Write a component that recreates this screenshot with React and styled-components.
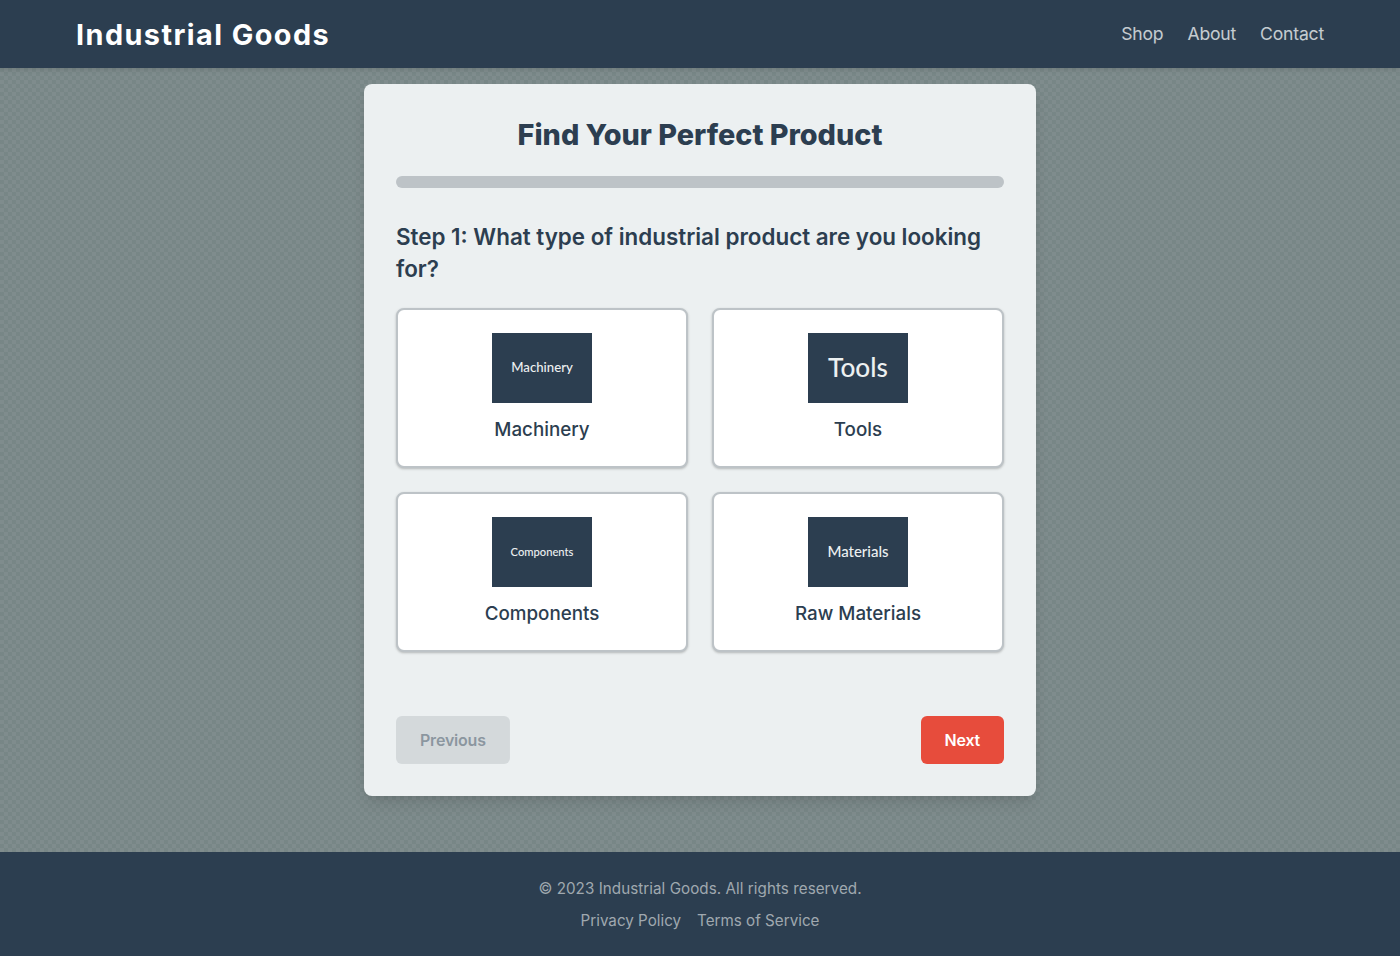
import React from "react";
import styled, { createGlobalStyle } from "styled-components";

const GlobalStyle = createGlobalStyle`
  * { box-sizing: border-box; }
  html, body { margin: 0; padding: 0; }
  body {
    font-family: Inter, "Liberation Sans", sans-serif;
    color: #2c3e50;
    background-color: #7f8c8d;
    background-image:
      linear-gradient(45deg, rgba(40, 80, 70, 0.09) 25%, transparent 25%, transparent 75%, rgba(40, 80, 70, 0.09) 75%),
      linear-gradient(45deg, rgba(40, 80, 70, 0.09) 25%, transparent 25%, transparent 75%, rgba(40, 80, 70, 0.09) 75%);
    background-size: 8px 8px;
    background-position: 0 0, 4px 4px;
  }
`;

const categories = [
  { id: "machinery", thumb: "Machinery", thumbSize: 13.2, label: "Machinery" },
  { id: "tools", thumb: "Tools", thumbSize: 26.2, label: "Tools" },
  { id: "components", thumb: "Components", thumbSize: 11.2, label: "Components" },
  { id: "materials", thumb: "Materials", thumbSize: 15, label: "Raw Materials" },
];

export default function App() {
  return (
    <Page>
      <GlobalStyle />
      <Header>
        <Logo>Industrial Goods</Logo>
        <Nav>
          <NavLink href="#">Shop</NavLink>
          <NavLink href="#">About</NavLink>
          <NavLink href="#">Contact</NavLink>
        </Nav>
      </Header>
      <Main>
        <Card>
          <Title>Find Your Perfect Product</Title>
          <ProgressTrack />
          <StepTitle>Step 1: What type of industrial product are you looking for?</StepTitle>
          <OptionGrid>
            {categories.map((item) => (
              <Option key={item.id}>
                <Thumb $size={item.thumbSize}>{item.thumb}</Thumb>
                <OptionLabel>{item.label}</OptionLabel>
              </Option>
            ))}
          </OptionGrid>
          <Actions>
            <PrevButton type="button" disabled>
              Previous
            </PrevButton>
            <NextButton type="button">Next</NextButton>
          </Actions>
        </Card>
      </Main>
      <Footer>
        <FooterText>© 2023 Industrial Goods. All rights reserved.</FooterText>
        <FooterLinks>
          <FooterLink href="#">Privacy Policy</FooterLink>
          <FooterLink href="#">Terms of Service</FooterLink>
        </FooterLinks>
      </Footer>
    </Page>
  );
}

const Page = styled.div`
  min-height: 956px;
  display: flex;
  flex-direction: column;
`;

const Header = styled.header`
  height: 68px;
  padding: 0 76px;
  display: flex;
  align-items: center;
  justify-content: space-between;
  background: #2c3e50;
  box-shadow: 0 2px 4px rgba(0, 0, 0, 0.1);
`;

const Logo = styled.div`
  font-size: 28.8px;
  font-weight: 700;
  letter-spacing: 1.44px;
  color: #fff;
`;

const Nav = styled.nav`
  display: flex;
  gap: 24px;
`;

const NavLink = styled.a`
  font-size: 17.6px;
  line-height: 28px;
  letter-spacing: -0.2px;
  color: #ecf0f1;
  opacity: 0.8;
  text-decoration: none;
`;

const Main = styled.main`
  flex: 1;
  padding: 16px 0 56px;
  display: flex;
  justify-content: center;
  align-items: flex-start;
`;

const Card = styled.section`
  width: 672px;
  padding: 33px 32px 32px;
  background: #ecf0f1;
  border-radius: 8px;
  box-shadow: 0 10px 15px -3px rgba(0, 0, 0, 0.1), 0 4px 6px -2px rgba(0, 0, 0, 0.05);
`;

const Title = styled.h1`
  margin: 0 0 23px;
  font-size: 28.8px;
  line-height: 36px;
  font-weight: 800;
  text-align: center;
  color: #2c3e50;
`;

const ProgressTrack = styled.div`
  height: 12px;
  margin-bottom: 33px;
  border-radius: 6px;
  background: #bdc3c7;
`;

const StepTitle = styled.h2`
  margin: 0 0 23px;
  font-size: 22.4px;
  line-height: 32px;
  font-weight: 600;
  color: #2c3e50;
`;

const OptionGrid = styled.div`
  display: grid;
  grid-template-columns: 1fr 1fr;
  gap: 24px;
`;

const Option = styled.div`
  height: 160px;
  padding-top: 23px;
  display: flex;
  flex-direction: column;
  align-items: center;
  background: #fff;
  border: 2px solid #bdc3c7;
  border-radius: 8px;
  box-shadow: 0 1px 3px rgba(0, 0, 0, 0.15), 0 1px 2px rgba(0, 0, 0, 0.1);
`;

const Thumb = styled.div`
  width: 100px;
  height: 70px;
  margin-bottom: 13px;
  padding-bottom: 2px;
  display: flex;
  align-items: center;
  justify-content: center;
  background: #2c3e50;
  color: #ecf0f1;
  font-family: Lato, "Liberation Sans", sans-serif;
  font-weight: 500;
  font-size: ${(p) => p.$size}px;
`;

const OptionLabel = styled.div`
  font-size: 18.8px;
  line-height: 28px;
  font-weight: 500;
  color: #2c3e50;
`;

const Actions = styled.div`
  margin-top: 64px;
  display: flex;
  justify-content: space-between;
`;

const PrevButton = styled.button`
  height: 48px;
  padding: 0 24px;
  border: 0;
  border-radius: 6px;
  background: #bdc3c7;
  color: #2c3e50;
  opacity: 0.5;
  font-family: inherit;
  font-size: 16px;
  font-weight: 600;
  letter-spacing: -0.2px;
`;

const NextButton = styled.button`
  height: 48px;
  padding: 0 24px;
  border: 0;
  border-radius: 6px;
  background: #e74c3c;
  color: #fff;
  font-family: inherit;
  font-size: 16px;
  font-weight: 600;
  letter-spacing: -0.2px;
`;

const Footer = styled.footer`
  height: 104px;
  padding-top: 25px;
  background: #2c3e50;
  color: #bdc3c7;
  text-align: center;
`;

const FooterText = styled.div`
  font-size: 15.2px;
  line-height: 24px;
  letter-spacing: 0.05px;
  margin-bottom: 8px;
  opacity: 0.8;
`;

const FooterLinks = styled.div`
  display: flex;
  justify-content: center;
  gap: 16px;
  opacity: 0.8;
`;

const FooterLink = styled.a`
  font-size: 15.2px;
  line-height: 24px;
  color: #bdc3c7;
  text-decoration: none;
`;
